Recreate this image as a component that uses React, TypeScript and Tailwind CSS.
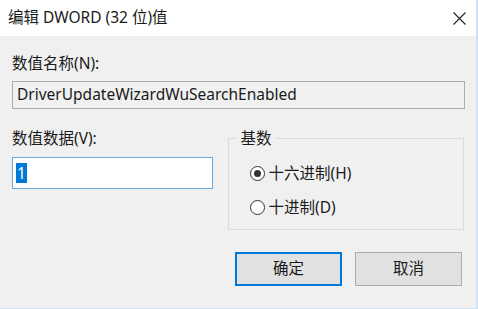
import React from "react";

const font = {
  fontFamily: '"Noto Sans", "Noto Sans CJK SC", sans-serif',
};

function Radio({ checked }: { checked?: boolean }) {
  return (
    <span className="flex h-[15px] w-[15px] items-center justify-center rounded-full border border-[#333] bg-white">
      {checked && <span className="h-[7px] w-[7px] rounded-full bg-[#333]" />}
    </span>
  );
}

export default function App() {
  return (
    <div
      style={font}
      className="relative h-[309px] w-[478px] overflow-hidden border-r-2 border-b border-[#cfe3f5] bg-[#f0f0f0] text-[15.5px] text-[#1a1a1a]"
    >
      {/* Title bar */}
      <div className="flex h-[36px] items-center justify-between bg-white pl-[8px] pr-[10px]">
        <span>编辑 DWORD (32 位)值</span>
        <svg width="13" height="13" viewBox="0 0 13 13">
          <path d="M0.5 0.5L12.5 12.5M12.5 0.5L0.5 12.5" stroke="#222" strokeWidth="1.1" />
        </svg>
      </div>

      <div className="px-[12px] pt-[17px]">
        <div className="leading-[20px]">数值名称(N):</div>
        <div className="mt-[8px] flex h-[28px] w-[453px] items-center border border-[#adadad] bg-[#f0f0f0] pl-[4px]">
          DriverUpdateWizardWuSearchEnabled
        </div>

        <div className="mt-[19px] flex">
          <div className="w-[216px]">
            <div className="leading-[20px]">数值数据(V):</div>
            <div className="mt-[9px] flex h-[32px] w-[201px] items-center border border-[#6aa9dc] bg-white pl-[3px]">
              <span className="bg-[#0078d7] px-[1px] leading-[20px] text-white">1</span>
            </div>
          </div>
          <div className="relative mt-[10px] h-[92px] w-[237px] border border-[#dcdcdc]">
            <span className="absolute -top-[11px] left-[8px] bg-[#f0f0f0] px-[4px] leading-[20px]">
              基数
            </span>
            <div className="flex flex-col gap-[14px] pl-[21px] pt-[24px]">
              <label className="flex items-center gap-[4px] leading-[20px]">
                <Radio checked />
                十六进制(H)
              </label>
              <label className="flex items-center gap-[4px] leading-[20px]">
                <Radio />
                十进制(D)
              </label>
            </div>
          </div>
        </div>

        <div className="mt-[22px] flex justify-end gap-[13px] pr-[2px]">
          <button className="flex h-[34px] w-[107px] items-center justify-center border-2 border-[#0078d7] bg-[#e1e1e1]">
            确定
          </button>
          <button className="flex h-[34px] w-[107px] items-center justify-center border border-[#adadad] bg-[#e1e1e1]">
            取消
          </button>
        </div>
      </div>
    </div>
  );
}
